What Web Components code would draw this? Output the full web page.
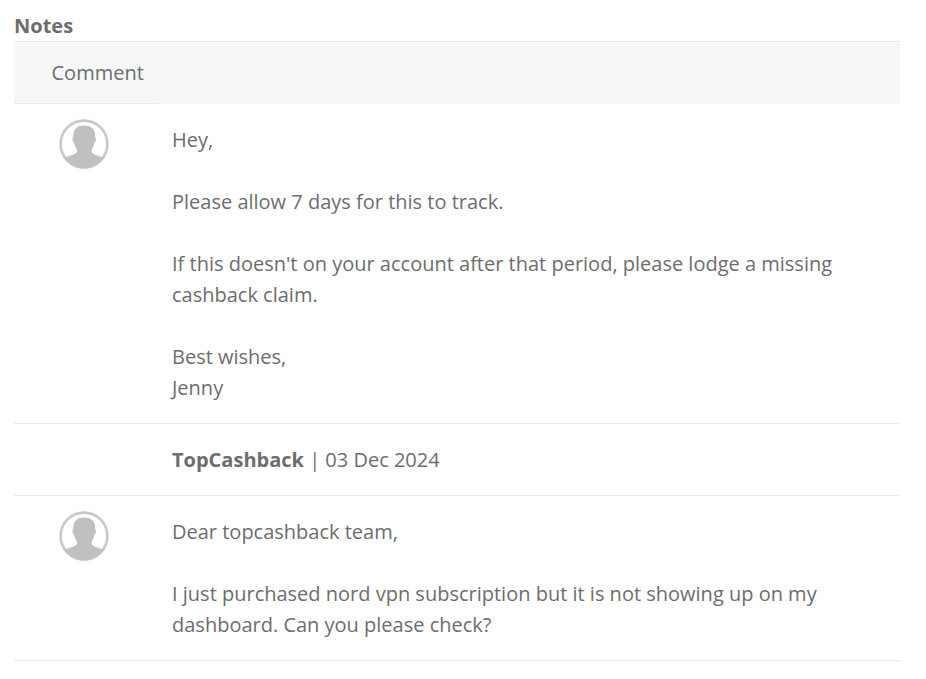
<!DOCTYPE html>
<html lang="en">
<head>
<meta charset="utf-8">
<title>Notes</title>
<style>
  body {
    margin: 0;
    background: #fff;
    color: #6d6d6d;
    font: 20px/31px "Open Sans", sans-serif;
  }
</style>
</head>
<body>
<notes-panel heading="Notes" label="Comment">
  <note-row avatar>Hey,<br><br>Please allow 7 days for this to track.<br><br>If this doesn't on your account after that period, please lodge a missing cashback claim.<br><br>Best wishes,<br>Jenny</note-row>
  <note-row><b>TopCashback</b> | 03 Dec 2024</note-row>
  <note-row avatar>Dear topcashback team,<br><br>I just purchased nord vpn subscription but it is not showing up on my dashboard. Can you please check?</note-row>
</notes-panel>

<script>
const panelStyle = `
:host {
  display: block;
  width: 886px;
  padding: 10px 0 0 14px;
}
h2 {
  margin: 0;
  font-size: 20px;
  font-weight: bold;
  line-height: 31px;
}
.header {
  display: flex;
  border-top: 1px solid #e8eaea;
  background: #f6f8f8;
}
.header span {
  box-sizing: border-box;
  width: 145px;
  padding: 15px 0 15px 37.5px;
  border-bottom: 1px solid #e8eaea;
}
`;

const rowStyle = `
:host {
  display: grid;
  grid-template-columns: 158px 1fr;
  border-bottom: 1px solid #e9e9e9;
}
.avatar {
  padding: 15px 0 0 45px;
}
.text {
  padding: 20px 38px 20px 0;
}
`;

class NotesPanel extends HTMLElement {
  constructor() {
    super();
    this._shadowRoot = this.attachShadow({ mode: "open" });
  }
  connectedCallback() {
    this._shadowRoot.innerHTML = `
      <style>${panelStyle}</style>
      <h2>${this.getAttribute("heading")}</h2>
      <div class="header"><span>${this.getAttribute("label")}</span></div>
      <slot></slot>
    `;
  }
}

class NoteRow extends HTMLElement {
  constructor() {
    super();
    this._shadowRoot = this.attachShadow({ mode: "open" });
  }
  connectedCallback() {
    const avatar = this.hasAttribute("avatar") ? "<user-avatar></user-avatar>" : "";
    this._shadowRoot.innerHTML = `
      <style>${rowStyle}</style>
      <div class="avatar">${avatar}</div>
      <div class="text"><slot></slot></div>
    `;
  }
}

class UserAvatar extends HTMLElement {
  constructor() {
    super();
    this._shadowRoot = this.attachShadow({ mode: "open" });
  }
  connectedCallback() {
    this._shadowRoot.innerHTML = `
      <style>
        :host { display: block; width: 50px; height: 50px; }
        svg { display: block; filter: blur(0.5px); }
      </style>
      <svg width="50" height="50" viewBox="0 0 50 50">
        <clipPath id="disc"><circle cx="25" cy="25" r="24.5"/></clipPath>
        <circle cx="25" cy="25" r="23.4" fill="none" stroke="#c6c8c9" stroke-width="2.6"/>
        <path clip-path="url(#disc)" fill="#bec0c1" d="M25.2 6.4C31.6 6.4 35.6 9.6 36 14.8L36.1 18C37.4 18 37.2 22.5 35.4 23.6C35 26.5 34 28.6 32.6 30.4V32.4C33.4 35 37 35.8 45 38.8V50H5V38.8C13 35.8 17.2 35 18 32.4V30.4C16.6 28.6 15.5 26.5 15 23.6C13.2 22.5 13 18 14.4 18L14.5 14.8C14.9 9.6 18.8 6.4 25.2 6.4Z"/>
      </svg>
    `;
  }
}

customElements.define("notes-panel", NotesPanel);
customElements.define("note-row", NoteRow);
customElements.define("user-avatar", UserAvatar);
</script>
</body>
</html>
